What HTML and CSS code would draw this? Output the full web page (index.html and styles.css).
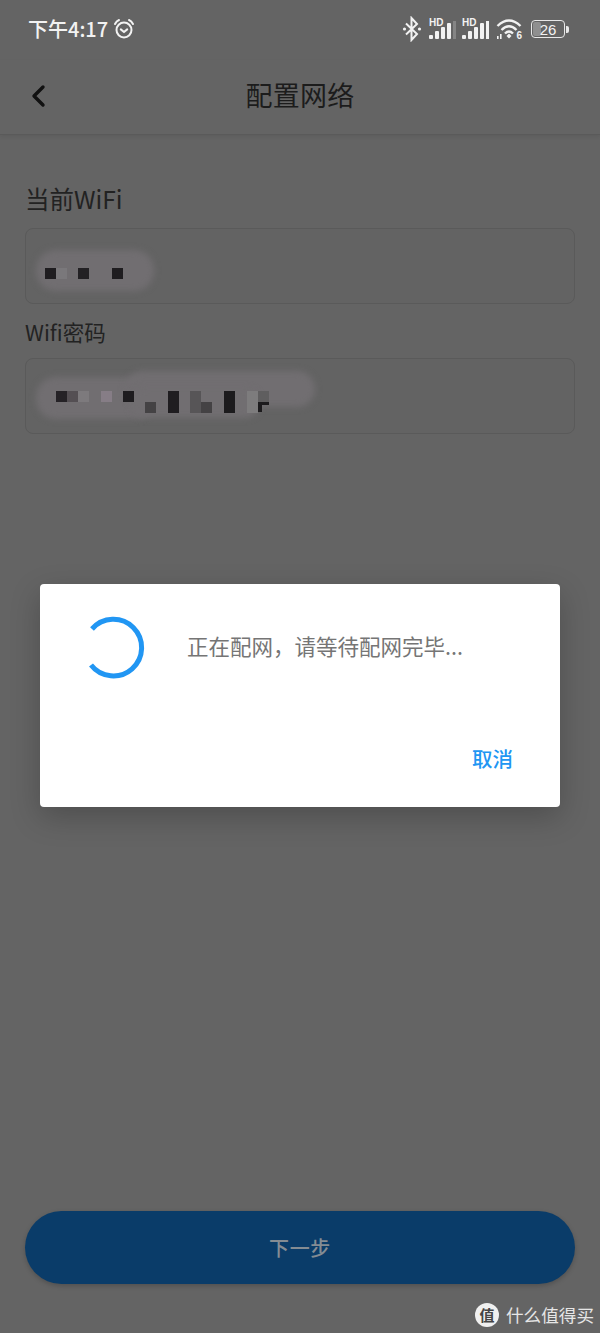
FILE: index.html
```html
<!DOCTYPE html>
<html lang="zh-CN">
<head>
  <meta charset="UTF-8" />
  <title>配置网络</title>
  <link rel="stylesheet" href="styles.css">
</head>
<body>

  <div class="screen">

    <div class="statusbar">
      <div class="status-left">
        <span class="time">下午4:17</span>
        <svg class="alarm" width="22" height="22" viewBox="0 0 22 22">
          <circle cx="11" cy="12" r="7.5" />
          <path d="M7.8 11.4 L11 14 L14.2 11.4" />
          <path d="M2 6 Q3.5 3 6 2" />
          <path d="M20 6 Q18.5 3 16 2" />
        </svg>
      </div>
      <div class="status-right">
        <svg class="bt" width="20" height="26" viewBox="0 0 20 26">
          <path d="M4 7.5 L15 18 L9.5 24 V2 L15 8 L4 18.5" />
          <circle cx="2.5" cy="13" r="1.6" />
          <circle cx="17.5" cy="13" r="1.6" />
        </svg>
        <svg class="signal" width="28" height="22" viewBox="0 0 28 22">
          <text x="0" y="8" class="tiny">HD</text>
          <rect x="0" y="17" width="4" height="4" rx="1" />
          <rect x="6" y="13" width="4" height="8" rx="1" />
          <rect x="12" y="9" width="4" height="12" rx="1" />
          <rect x="18" y="5" width="4" height="16" rx="1" />
          <rect x="24" y="3" width="3" height="18" class="off" />
        </svg>
        <svg class="signal" width="28" height="22" viewBox="0 0 28 22">
          <text x="0" y="8" class="tiny">HD</text>
          <rect x="0" y="17" width="4" height="4" rx="1" />
          <rect x="6" y="13" width="4" height="8" rx="1" />
          <rect x="12" y="9" width="4" height="12" rx="1" />
          <rect x="18" y="5" width="4" height="16" rx="1" />
          <rect x="24" y="3" width="3" height="18" />
        </svg>
        <svg class="wifi" width="27" height="22" viewBox="0 0 27 22">
          <path d="M1.5 8 Q13 -3 24.5 8" />
          <path d="M5.5 12 Q13 4.5 20.5 12" />
          <path d="M9 15.5 Q13 11.5 17 15.5" />
          <path class="solid" d="M10.5 18 L13 15.5 L15.5 18 L13 20.5 Z" />
          <text x="20.5" y="21" class="tiny">6</text>
          <rect x="1" y="18" width="1.6" height="3" />
          <rect x="4" y="16" width="1.6" height="5" />
        </svg>
        <div class="battery">
          <div class="battery-body">
            <div class="battery-fill"></div>
            <span class="battery-num">26</span>
          </div>
          <div class="battery-tip"></div>
        </div>
      </div>
    </div>

    <div class="header">
      <svg class="back" width="16" height="24" viewBox="0 0 16 24">
        <path d="M13 3 L4 12 L13 21" />
      </svg>
      <div class="title">配置网络</div>
    </div>

    <div class="form">
      <div class="label label-wifi">当前WiFi</div>
      <div class="field">
        <svg class="mosaic" width="550" height="76" viewBox="0 0 550 76">
          <rect class="smudge" x="11" y="22" width="118" height="41" rx="20" />
          <rect x="20" y="40" width="11" height="11" fill="#1f1d20" />
          <rect x="31" y="40" width="11" height="11" fill="#7a787b" />
          <rect x="53" y="40" width="11" height="11" fill="#232124" />
          <rect x="87" y="40" width="11" height="11" fill="#1f1d20" />
        </svg>
      </div>
      <div class="label label-pwd">Wifi密码</div>
      <div class="field">
        <svg class="mosaic" width="550" height="76" viewBox="0 0 550 76">
          <rect class="smudge" x="11" y="19" width="120" height="42" rx="20" />
          <rect class="smudge" x="100" y="13" width="190" height="36" rx="18" />
          <rect class="smudge" x="105" y="30" width="130" height="30" rx="15" />
          <rect x="31" y="33" width="11" height="11" fill="#252226" />
          <rect x="42" y="33" width="11" height="11" fill="#544f53" />
          <rect x="53" y="33" width="11" height="11" fill="#7d7a7d" />
          <rect x="76" y="33" width="11" height="11" fill="#867d86" />
          <rect x="98" y="33" width="11" height="11" fill="#1e1c1f" />
          <rect x="120" y="44" width="11" height="11" fill="#444244" />
          <rect x="143" y="33" width="11" height="22" fill="#1f1d20" />
          <rect x="165" y="33" width="11" height="22" fill="#575557" />
          <rect x="176" y="44" width="11" height="11" fill="#444244" />
          <rect x="199" y="33" width="11" height="22" fill="#1c1b1d" />
          <rect x="222" y="33" width="11" height="22" fill="#7d7c7d" />
          <rect x="233" y="33" width="11" height="11" fill="#5f5e5f" />
          <path d="M233 44 H244 V47 H237 V54 H233 Z" fill="#1c1b1d" />
        </svg>
      </div>
    </div>

    <div class="next-btn">下一步</div>

    <div class="watermark">
      <span class="wm-logo">值</span>
      <span class="wm-text">什么值得买</span>
    </div>

    <!-- loading dialog -->
    <div class="dialog">
      <div class="dialog-row">
        <svg class="spinner" width="64" height="64" viewBox="0 0 64 64">
          <path d="M10 13 A28.3 28.3 0 1 1 9 49" />
        </svg>
        <div class="dialog-text">正在配网，请等待配网完毕...</div>
      </div>
      <div class="dialog-actions">
        <span class="cancel">取消</span>
      </div>
    </div>

  </div>

</body>
</html>
```

FILE: styles.css
```css
* {
  box-sizing: border-box;
}

body {
  margin: 0;
  padding: 0;
  background: #646464;
  font-family: "Noto Sans CJK SC", "Noto Sans", sans-serif;
}

.screen {
  position: relative;
  width: 600px;
  height: 1333px;
  overflow: hidden;
  display: flex;
  flex-direction: column;
  background: #646464;
}

.statusbar {
  height: 60px;
  flex: none;
  display: flex;
  justify-content: space-between;
  align-items: center;
  padding: 0 31px 2px 28px;
  color: #f2f2f2;
}

.status-left {
  display: flex;
  align-items: center;
  gap: 5px;
}

.time {
  font-size: 20px;
  line-height: 26px;
  font-weight: 500;
}

.alarm {
  fill: none;
  stroke: #f2f2f2;
  stroke-width: 2;
  stroke-linecap: round;
}

.status-right {
  display: flex;
  align-items: center;
  gap: 5px;
}

.bt {
  fill: #f2f2f2;
  stroke: none;
  margin-right: 2px;
}

.bt path {
  fill: none;
  stroke: #f2f2f2;
  stroke-width: 2;
}

.signal {
  fill: #f2f2f2;
}

.signal .off {
  fill: #858585;
}

.tiny {
  font-family: "Liberation Sans", sans-serif;
  font-size: 10px;
  font-weight: 700;
  fill: #f2f2f2;
  stroke: none;
}

.wifi {
  fill: #f2f2f2;
  margin-left: 1px;
}

.wifi path {
  fill: none;
  stroke: #f2f2f2;
  stroke-width: 2.4;
}

.wifi .solid {
  fill: #f2f2f2;
  stroke: none;
}

.battery {
  display: flex;
  align-items: center;
  gap: 1px;
  margin-left: 3px;
}

.battery-body {
  position: relative;
  width: 34px;
  height: 18px;
  border: 1.5px solid #e8e8e8;
  border-radius: 4px;
  display: flex;
  justify-content: center;
  align-items: center;
}

.battery-fill {
  position: absolute;
  left: 1px;
  top: 1px;
  bottom: 1px;
  width: 8px;
  background: #8f8f8f;
  border-radius: 2px;
}

.battery-num {
  position: relative;
  font-family: "Liberation Sans", sans-serif;
  font-size: 15px;
  line-height: 15px;
}

.battery-tip {
  width: 3px;
  height: 7px;
  background: #e8e8e8;
  border-radius: 0 2px 2px 0;
}

.header {
  height: 75px;
  flex: none;
  position: relative;
  display: flex;
  justify-content: center;
  align-items: center;
  padding-bottom: 4px;
  border-bottom: 1px solid #5a5a5a;
  box-shadow: 0 2px 4px rgba(0, 0, 0, 0.07);
}

.back {
  position: absolute;
  left: 30px;
  top: 24px;
  fill: none;
  stroke: #111;
  stroke-width: 3.4;
  stroke-linecap: round;
  stroke-linejoin: round;
}

.title {
  font-size: 27px;
  line-height: 38px;
  color: #1c1c1c;
  letter-spacing: 0.2px;
}

.form {
  padding: 47px 25px 0;
}

.label {
  color: #222;
}

.label-wifi {
  font-size: 24.5px;
  line-height: 34px;
  margin-bottom: 12px;
}

.label-pwd {
  font-size: 21.5px;
  line-height: 28px;
  margin-top: 14px;
  margin-bottom: 12px;
}

.field {
  height: 76px;
  border: 1.5px solid #5a5a5a;
  border-radius: 8px;
  background: #636363;
  overflow: hidden;
}

.mosaic {
  display: block;
  margin: -1.5px;
}

.smudge {
  fill: #716e71;
  filter: blur(3px);
}

.next-btn {
  margin: auto 25px 49px;
  height: 73px;
  flex: none;
  border-radius: 37px;
  background: #0a3c69;
  box-shadow: 0 2px 5px rgba(0, 0, 0, 0.2);
  color: #848c93;
  font-size: 20px;
  font-weight: 500;
  letter-spacing: 0.6px;
  display: flex;
  justify-content: center;
  align-items: center;
}

.watermark {
  position: absolute;
  left: 475px;
  top: 1303px;
  display: flex;
  align-items: center;
  gap: 7px;
  color: #e6e6e6;
}

.wm-logo {
  width: 24px;
  height: 24px;
  border-radius: 50%;
  background: #f0f0f0;
  color: #444;
  font-size: 15px;
  font-weight: 700;
  line-height: 24px;
  text-align: center;
}

.wm-text {
  font-size: 17.6px;
  line-height: 24px;
}

.dialog {
  position: absolute;
  left: 40px;
  top: 584px;
  width: 520px;
  height: 223px;
  background: #fff;
  border-radius: 4px;
  box-shadow: 0 10px 30px rgba(0, 0, 0, 0.22);
  padding: 32px 47px 0 42px;
}

.dialog-row {
  display: flex;
  align-items: center;
  gap: 41px;
}

.spinner {
  flex: none;
  fill: none;
  stroke: #2196f3;
  stroke-width: 5;
}

.dialog-text {
  font-size: 21.5px;
  line-height: 28px;
  color: #757575;
  white-space: nowrap;
  margin-bottom: 4px;
}

.dialog-actions {
  display: flex;
  justify-content: flex-end;
  margin-top: 63px;
}

.cancel {
  font-size: 20.5px;
  line-height: 30px;
  font-weight: 500;
  color: #2196f3;
}
```
